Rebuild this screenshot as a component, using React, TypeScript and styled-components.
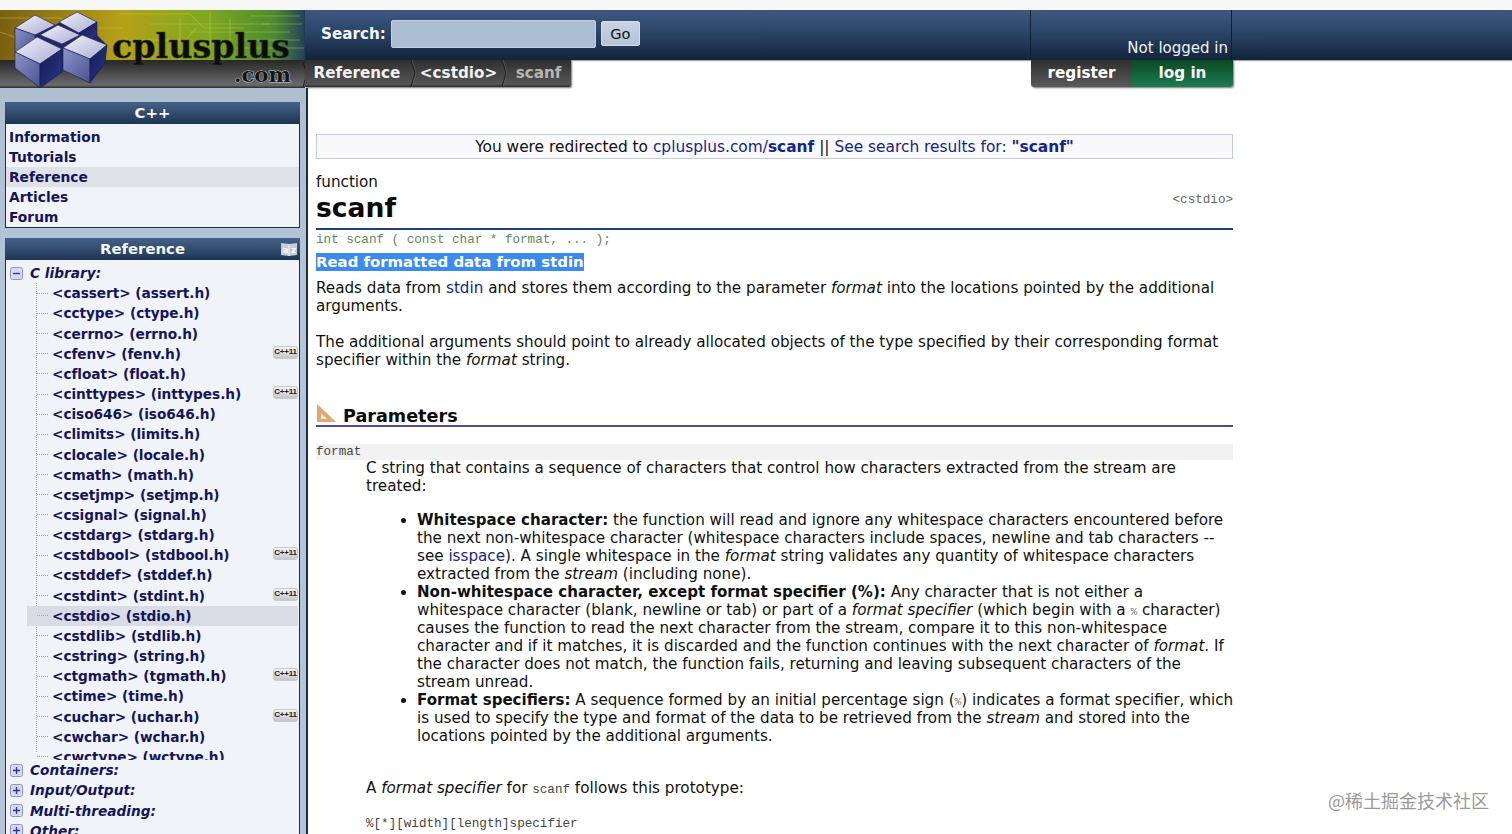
import React from "react";
import styled, { createGlobalStyle } from "styled-components";

const Global = createGlobalStyle`
  html, body { margin: 0; padding: 0; height: 100%; overflow: hidden; background: #fff; }
  body { font-family: "DejaVu Sans", Verdana, sans-serif; color: #111; }
  #root { height: 100%; }
`;

const Page = styled.div`
  height: 834px; overflow: hidden; position: relative; background: #fff; display: flex; flex-direction: column;
`;
const TopStrip = styled.div`height: 10px; background: #f6f6f6; flex: none;`;
const Masthead = styled.header`display: flex; height: 78px; flex: none;`;
const LogoBox = styled.div`width: 305px; flex: none; height: 78px;`;
const MastRight = styled.div`flex: 1; display: flex; flex-direction: column; min-width: 0;`;
const BlueBar = styled.div`
  height: 50px; flex: none; display: flex; align-items: center;
  background: linear-gradient(#3d5880, #2b4467 45%, #12243b);
  box-shadow: 0 1px 1px rgba(0,0,0,.35);
`;
const SearchForm = styled.div`
  display: flex; align-items: center; margin: -3px 0 0 16px; width: 709px;
`;
const SearchLabel = styled.label`color: #f3f6fa; font-weight: 700; font-size: 15.2px; margin-right: 5px;`;
const SearchInput = styled.div`
  width: 203px; height: 26px; background: #aabdd3; border: 1px solid #c3d0df; border-radius: 2px; margin-right: 5px;
`;
const GoButton = styled.div`
  width: 37px; height: 23px; background: linear-gradient(#c6d3e2, #b3c4d7); border: 1px solid #d4deea; border-radius: 2px;
  color: #111; font-size: 14.6px; display: flex; align-items: center; justify-content: center;
`;
const UserBox = styled.div`
  width: 202px; height: 50px; border-left: 1px solid #0f1f33; border-right: 1px solid #0f1f33;
  display: flex; align-items: flex-end; justify-content: flex-end; padding: 0 3px 3px 0; box-sizing: border-box;
  color: #eef2f7; font-size: 15px;
`;
const TabRow = styled.div`height: 28px; display: flex; flex: none;`;
const Crumbs = styled.nav`
  display: flex; width: 266px; height: 27px; flex: none; box-sizing: border-box;
  background: linear-gradient(#2f2f2f, #555 90%, #2a2a2a);
  border-radius: 0 0 2px 0; box-shadow: 1px 1px 2px rgba(0,0,0,.55);
`;
const Crumb = styled.span<{ $dim?: boolean; $w: number }>`
  width: ${p => p.$w}px; box-sizing: border-box; display: flex; align-items: center; justify-content: center;
  font-weight: 700; font-size: 15.2px; padding-bottom: 1px;
  color: ${p => (p.$dim ? "#b6b6b6" : "#f2f2f2")};
`;
const CrumbSep = styled.svg`flex: none; display: block;`;
const Auth = styled.div`display: flex; margin-left: 460px; width: 202px; height: 27px; flex: none; box-shadow: 1px 1px 2px rgba(0,0,0,.55); border-radius: 0 0 3px 3px; overflow: hidden;`;
const AuthBtn = styled.span<{ $green?: boolean }>`
  flex: ${p => (p.$green ? "0 0 101px" : "1")};
  display: flex; align-items: center; justify-content: center; color: #fff; font-weight: 700; font-size: 15.2px; padding-bottom: 1px;
  background: ${p => (p.$green ? "linear-gradient(#0b4a24, #1c7c50)" : "linear-gradient(#2f2f2f, #5a5a5a)")};
`;

const Body = styled.div`display: flex; flex: 1; min-height: 0;`;
const Sidebar = styled.aside`
  background: linear-gradient(#aebfd0, #b4c5d9 200px); border-right: 2px solid #1f2d44;
  padding: 14px 0 0 5px; width: 301px; flex: none; display: flex; flex-direction: column; gap: 10px; overflow: hidden;
`;
const Panel = styled.section<{ $grow?: boolean }>`
  width: 295px; box-sizing: border-box; background: #f0f4f9; border: 1px solid #1d2f49; border-top: 0; flex: ${p => (p.$grow ? 1 : "none")};
  border-radius: 2px 2px 0 0;
`;
const PanelHead = styled.h2<{ $pad?: boolean }>`
  height: 22px; box-sizing: border-box; display: flex; align-items: center; justify-content: center; position: relative;
  background: linear-gradient(#46628a, #1d3552); color: #f4f6f9; font-size: 14.9px; font-weight: 700;
  padding: 0 ${p => (p.$pad ? "20px" : "0")} 1px 0; margin: 0 -1px;
`;
const AzIcon = styled.svg`position: absolute; right: 2px; top: 3px;`;
const NavList = styled.ul`list-style: none; margin: 0; padding: 3px 0 0;`;
const NavItem = styled.li<{ $on?: boolean }>`
  height: 20px; line-height: 20px; padding-left: 3px; font-weight: 700; font-size: 13.8px; color: #14145c;
  background: ${p => (p.$on ? "#dde1e8" : "transparent")};
`;
const Tree = styled.div`padding-top: 3px;`;
const Branch = styled.div`
  height: 20.2px; display: flex; align-items: center; gap: 7px; padding-left: 4px;
  font-size: 13.7px; font-weight: 700; font-style: italic; color: #14145c; white-space: nowrap;
`;
const Leaves = styled.ul`
  list-style: none; margin: 0 0 0 21px; padding: 0; height: 477px; overflow: hidden;
  background: repeating-linear-gradient(#a9a9b8 0 1px, transparent 1px 2px) 9px 0 / 1px 469px no-repeat;
`;
const Leaf = styled.li<{ $on?: boolean }>`
  height: 20.17px; display: flex; align-items: center; padding-left: 10px; margin-right: 1px;
  font-size: 13.7px; letter-spacing: -.06px; font-weight: 700; color: #14145c; white-space: nowrap;
  background: ${p => (p.$on ? "#d7dce5" : "transparent")};
`;
const Dash = styled.span`width: 11px; border-top: 1px dotted #a0a0b0; margin-right: 4px; flex: none;`;
const Badge = styled.span`
  margin-left: auto; width: 25px; height: 13px; border-radius: 3px; background: linear-gradient(#f4f4f4, #c6c6c6);
  border: 1px solid #c8c8c8; box-sizing: border-box; color: #222; font-size: 8px; font-weight: 700; line-height: 9px; text-align: center; letter-spacing: -.2px;
  font-family: "Liberation Sans", sans-serif; margin-top: -3px;
`;

const Main = styled.main`flex: 1; padding: 46px 0 0 8px; min-width: 0;`;
const Content = styled.div`width: 917px; font-size: 15.18px; line-height: 18.15px;`;
const Notice = styled.div`
  height: 25px; box-sizing: border-box; border: 1px solid #c4cbd8; background: #f9f9fc; text-align: center; padding-top: 1px; line-height: 23px; color: #111; white-space: nowrap;
  margin-bottom: 14px; font-size: 15.4px;
`;
const Link = styled.a`color: #14248c; text-decoration: none;`;
const Kind = styled.div`height: 18px;`;
const TitleRow = styled.div`display: flex; justify-content: space-between; align-items: flex-start; border-bottom: 2px solid #1f3f78; height: 37px;`;
const Title = styled.h1`margin: 0; font-size: 26.6px; line-height: 33px; font-weight: 700; color: #0a0a0a;`;
const Header = styled.span`font-family: "Liberation Mono", monospace; font-size: 12.6px; line-height: 18px; color: #666;`;
const Proto = styled.div`font-family: "Liberation Mono", monospace; font-size: 12.6px; color: #5c8a5c; line-height: 18px; height: 20px; padding-top: 1px; box-sizing: border-box;`;
const Selected = styled.div`
  display: inline-block; background: #3b8bef; color: #fff; font-weight: 700; font-size: 14.92px; height: 18px; line-height: 18px;
`;
const SelWrap = styled.div`height: 26px; margin-top: 3px;`;
const P = styled.p<{ $mb?: number }>`margin: 0 0 ${p => p.$mb ?? 17}px;`;
const ParamHead = styled.h3`
  margin: 33px 0 17px; height: 22px; display: flex; align-items: flex-end; gap: 7px; border-bottom: 2px solid #564a8f;
  font-size: 17.6px; line-height: 18px; font-weight: 700; color: #0a0a0a;
`;
const ParamIcon = styled.svg`flex: none; margin-bottom: 2px;`;
const Term = styled.div`font-family: "Liberation Mono", monospace; font-size: 12.6px; background: #f2f2f2; height: 16px; line-height: 17px; color: #444;`;
const Desc = styled.div<{ $up?: boolean }>`margin: ${p => (p.$up ? "-1px" : "0")} 0 0 50px;`;
const Bullets = styled.ul`margin: 0 -1px 34px 0; padding: 0 0 0 101px; line-height: 18px;`;
const Lead = styled.b`font-size: 15.05px; line-height: 0;`;
const Mono = styled.span`font-family: "Liberation Mono", monospace; font-size: 12.6px; color: #444; line-height: 0;`;
const MonoPct = styled.span`font-family: "Liberation Mono", monospace; font-size: 11px; color: #777; line-height: 0;`;
const Syntax = styled.div`font-family: "Liberation Mono", monospace; font-size: 12.6px; color: #444; margin-top: 18px;`;
const Watermark = styled.div`
  position: absolute; right: 23px; bottom: 23px; color: #9a9a9a; font-size: 18px; line-height: 22px;
  font-family: "Noto Sans CJK SC", "Noto Sans", sans-serif; background: rgba(255,255,255,.4);
`;

const Logo = () => (
  <svg width="305" height="78" viewBox="0 0 305 78" style={{ display: "block" }}>
    <defs>
      <linearGradient id="gold" x1="0" x2="1" y1="0" y2="0">
        <stop offset="0" stopColor="#7a5f12" />
        <stop offset=".4" stopColor="#b5a118" />
        <stop offset=".68" stopColor="#7ea722" />
        <stop offset=".9" stopColor="#4d8a32" />
        <stop offset="1" stopColor="#23405c" />
      </linearGradient>
      <linearGradient id="dark" x1="0" x2="0" y1="0" y2="1">
        <stop offset="0" stopColor="#272727" />
        <stop offset=".9" stopColor="#6a6a6a" />
        <stop offset="1" stopColor="#2a2a2a" />
      </linearGradient>
      <linearGradient id="top" x1="0" x2="1" y1="0" y2="1">
        <stop offset="0" stopColor="#f2f2fb" />
        <stop offset="1" stopColor="#a9acd2" />
      </linearGradient>
      <linearGradient id="leftf" x1="0" x2="1" y1="0" y2="1">
        <stop offset="0" stopColor="#8c93cc" />
        <stop offset="1" stopColor="#4a528f" />
      </linearGradient>
      <linearGradient id="rightf" x1="0" x2="1" y1="0" y2="1">
        <stop offset="0" stopColor="#141c58" />
        <stop offset="1" stopColor="#2c3684" />
      </linearGradient>
    </defs>
    <rect width="305" height="50" fill="url(#gold)" />
    <g stroke="#d9c93c" strokeOpacity=".45" fill="none">
      <path d="M0 8h60l12 10h50M0 22l40 14M120 4h70l14 14h40M130 30h56l10-12M180 8v26M210 2v34M230 8v30" />
      <path d="M150 14h120M190 22h100M240 30h60M236 38h68M250 6h50M262 14h40" stroke="#a6d83c" />
    </g>
    <rect y="50" width="305" height="28" fill="url(#dark)" />
    <path d="M303 52l4 12-4 13" stroke="#1c1c1c" fill="none" />
    <path d="M15 18L35 5 55 15 77 2 97 12V25L107 35 105 53 90 73 63 60 62 62 40 78 15 58z" fill="#232861" />
    <g stroke="#1a2050" strokeWidth=".6">
      <path d="M15 18L35 5l20 10-20 10z" fill="url(#top)" />
      <path d="M15 18l20 7v13L15 42z" fill="url(#leftf)" />
      <path d="M59 12L77 2l20 10-18 11z" fill="url(#top)" />
      <path d="M79 23L97 12v13L85 35z" fill="url(#rightf)" />
      <path d="M40 25l18-10 22 10-18 9z" fill="url(#top)" />
      <path d="M15 42l22-15 25 12-22 15z" fill="url(#top)" />
      <path d="M15 42l25 12v24L15 58z" fill="url(#leftf)" />
      <path d="M40 54l22-15v23L40 78z" fill="url(#rightf)" />
      <path d="M63 38l19-13 25 10-17 14z" fill="url(#top)" />
      <path d="M63 38l27 11v24L63 60z" fill="url(#leftf)" />
      <path d="M90 49l17-14-2 18-15 20z" fill="url(#rightf)" />
    </g>
    <text x="112" y="48" fontFamily="'DejaVu Serif', serif" fontWeight="700" fontSize="34" textLength="178" lengthAdjust="spacingAndGlyphs" fill="#0c0c0c" stroke="#3b3b2a" strokeWidth=".6">cplusplus</text>
    <text x="234" y="72" fontFamily="'DejaVu Serif', serif" fontWeight="700" fontSize="20" textLength="57" lengthAdjust="spacingAndGlyphs" fill="#161616" stroke="#d8d8d8" strokeWidth=".9" paintOrder="stroke">.com</text>
  </svg>
);

const Toggle = ({ open }: { open?: boolean }) => (
  <svg width="13" height="13" viewBox="0 0 13 13" style={{ flex: "none" }}>
    <rect x=".5" y=".5" width="12" height="12" rx="2" fill="#d6d9f2" stroke="#8f93d4" />
    <path d={open ? "M3 6.5h7" : "M3 6.5h7M6.5 3v7"} stroke="#33358a" strokeWidth="1.3" />
  </svg>
);

const Sep = () => (
  <CrumbSep width="8" height="27" viewBox="0 0 8 27">
    <path d="M2 0l4 13-4 14" stroke="#1e1e1e" fill="none" />
    <path d="M3 0l4 13-4 14" stroke="#6a6a6a" strokeOpacity=".5" fill="none" />
  </CrumbSep>
);

const leaves: [string, boolean?, boolean?][] = [
  ["<cassert> (assert.h)"], ["<cctype> (ctype.h)"], ["<cerrno> (errno.h)"], ["<cfenv> (fenv.h)", true],
  ["<cfloat> (float.h)"], ["<cinttypes> (inttypes.h)", true], ["<ciso646> (iso646.h)"], ["<climits> (limits.h)"],
  ["<clocale> (locale.h)"], ["<cmath> (math.h)"], ["<csetjmp> (setjmp.h)"], ["<csignal> (signal.h)"],
  ["<cstdarg> (stdarg.h)"], ["<cstdbool> (stdbool.h)", true], ["<cstddef> (stddef.h)"], ["<cstdint> (stdint.h)", true],
  ["<cstdio> (stdio.h)", false, true], ["<cstdlib> (stdlib.h)"], ["<cstring> (string.h)"], ["<ctgmath> (tgmath.h)", true],
  ["<ctime> (time.h)"], ["<cuchar> (uchar.h)", true], ["<cwchar> (wchar.h)"], ["<cwctype> (wctype.h)"],
];

export default function App() {
  return (
    <Page>
      <Global />
      <TopStrip />
      <Masthead>
        <LogoBox><Logo /></LogoBox>
        <MastRight>
          <BlueBar>
            <SearchForm>
              <SearchLabel>Search:</SearchLabel>
              <SearchInput />
              <GoButton>Go</GoButton>
            </SearchForm>
            <UserBox>Not logged in</UserBox>
          </BlueBar>
          <TabRow>
            <Crumbs>
              <Crumb $w={104}>Reference</Crumb>
              <Sep />
              <Crumb $w={83}>&lt;cstdio&gt;</Crumb>
              <Sep />
              <Crumb $w={61} $dim>scanf</Crumb>
            </Crumbs>
            <Auth>
              <AuthBtn>register</AuthBtn>
              <AuthBtn $green>log in</AuthBtn>
            </Auth>
          </TabRow>
        </MastRight>
      </Masthead>
      <Body>
        <Sidebar>
          <Panel>
            <PanelHead>C++</PanelHead>
            <NavList>
              <NavItem>Information</NavItem>
              <NavItem>Tutorials</NavItem>
              <NavItem $on>Reference</NavItem>
              <NavItem>Articles</NavItem>
              <NavItem>Forum</NavItem>
            </NavList>
          </Panel>
          <Panel $grow>
            <PanelHead $pad>
              Reference
              <AzIcon width="18" height="16" viewBox="0 0 18 16">
                <path d="M1 2l8 1 8-1v12l-8 1-8-1z" fill="#c4ccd6" />
                <path d="M9 3v12" stroke="#f2f4f7" />
                <text x="2.5" y="12" fontSize="9" fontFamily="'DejaVu Sans', sans-serif" fill="#f4f6f8">a</text>
                <text x="11" y="12" fontSize="9" fontFamily="'DejaVu Sans', sans-serif" fill="#f4f6f8">z</text>
              </AzIcon>
            </PanelHead>
            <Tree>
              <Branch><Toggle open />C library:</Branch>
              <Leaves>
                {leaves.map(([t, b, on]) => (
                  <Leaf key={t} $on={on}><Dash />{t}{b && <Badge>C++11</Badge>}</Leaf>
                ))}
              </Leaves>
              <Branch><Toggle />Containers:</Branch>
              <Branch><Toggle />Input/Output:</Branch>
              <Branch><Toggle />Multi-threading:</Branch>
              <Branch><Toggle />Other:</Branch>
            </Tree>
          </Panel>
        </Sidebar>
        <Main>
          <Content>
            <Notice>
              You were redirected to <Link>cplusplus.com/<b>scanf</b></Link> || <Link>See search results for: <b>"scanf"</b></Link>
            </Notice>
            <Kind>function</Kind>
            <TitleRow>
              <Title>scanf</Title>
              <Header>&lt;cstdio&gt;</Header>
            </TitleRow>
            <Proto>int scanf ( const char * format, ... );</Proto>
            <SelWrap><Selected>Read formatted data from stdin</Selected></SelWrap>
            <P $mb={18}>Reads data from <Link>stdin</Link> and stores them according to the parameter <i>format</i> into the locations pointed by the additional arguments.</P>
            <P $mb={0}>The additional arguments should point to already allocated objects of the type specified by their corresponding format specifier within the <i>format</i> string.</P>
            <ParamHead>
              <ParamIcon width="20" height="19" viewBox="0 0 20 19">
                <path d="M1 0l19 18H1z" fill="#e2a66e" />
                <path d="M5 9l6 6H5z" fill="#fff" fillOpacity=".75" />
              </ParamIcon>
              Parameters
            </ParamHead>
            <Term>format</Term>
            <Desc $up>
              <P $mb={16}>C string that contains a sequence of characters that control how characters extracted from the stream are treated:</P>
            </Desc>
            <Bullets>
              <li><Lead>Whitespace character:</Lead> the function will read and ignore any whitespace characters encountered before the next non-whitespace character (whitespace characters include spaces, newline and tab characters -- see <Link>isspace</Link>). A single whitespace in the <i>format</i> string validates any quantity of whitespace characters extracted from the <i>stream</i> (including none).</li>
              <li><Lead>Non-whitespace character, except format specifier (%):</Lead> Any character that is not either a<br />whitespace character (blank, newline or tab) or part of a <i>format specifier</i> (which begin with a <MonoPct>%</MonoPct> character)<br />causes the function to read the next character from the stream, compare it to this non-whitespace<br />character and if it matches, it is discarded and the function continues with the next character of <i>format</i>. If<br />the character does not match, the function fails, returning and leaving subsequent characters of the<br />stream unread.</li>
              <li><Lead>Format specifiers:</Lead> A sequence formed by an initial percentage sign (<MonoPct>%</MonoPct>) indicates a format specifier, which is used to specify the type and format of the data to be retrieved from the <i>stream</i> and stored into the locations pointed by the additional arguments.</li>
            </Bullets>
            <Desc>
              A <i>format specifier</i> for <Mono>scanf</Mono> follows this prototype:
              <Syntax>%[*][width][length]specifier</Syntax>
            </Desc>
          </Content>
        </Main>
      </Body>
      <Watermark>@稀土掘金技术社区</Watermark>
    </Page>
  );
}
